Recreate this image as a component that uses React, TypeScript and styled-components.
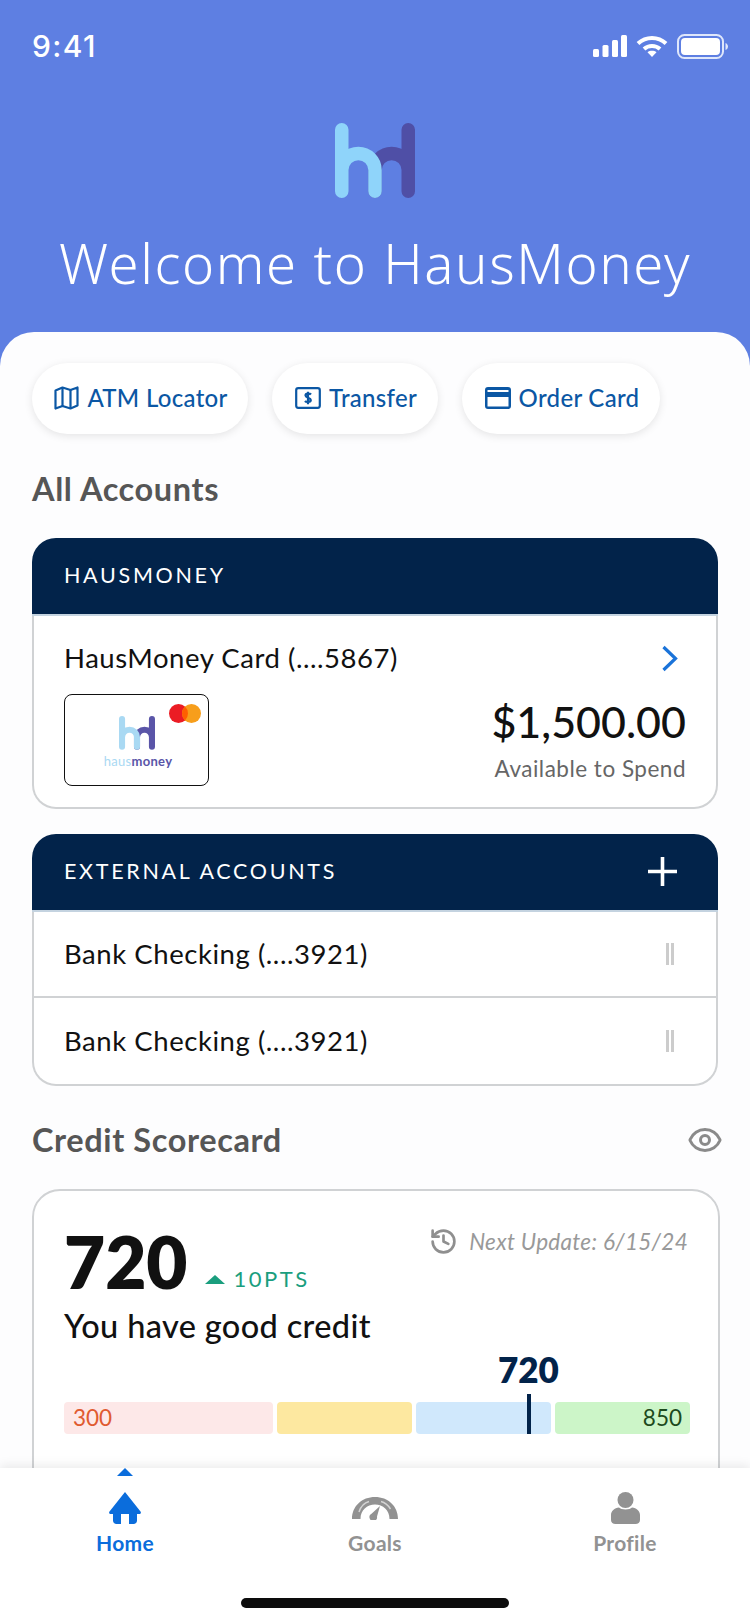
import React from 'react';
import styled, { createGlobalStyle } from 'styled-components';
import { History, Eye } from 'lucide-react';

const FONT = `Lato, "Noto Sans", "Liberation Sans", sans-serif`;

const GlobalStyle = createGlobalStyle`
    html, body {
        margin: 0;
        padding: 0;
        background: #fff;
    }
    * {
        box-sizing: border-box;
    }
`;

const Screen = styled.div`
    position: relative;
    width: 750px;
    height: 1624px;
    overflow: hidden;
    background: #5e7fe2;
    font-family: ${FONT};
    display: flex;
    flex-direction: column;
`;

const StatusBar = styled.div`
    height: 92px;
    flex: none;
    padding: 28px 22px 0 32px;
    display: flex;
    justify-content: space-between;
    align-items: flex-start;
`;

const Clock = styled.span`
    font-family: "Inter", sans-serif;
    font-size: 30px;
    line-height: 36px;
    font-weight: 500;
    letter-spacing: 1.4px;
    color: #fff;
`;

const StatusIcons = styled.div`
    display: flex;
    align-items: center;
    gap: 9px;
    height: 36px;
`;

const Hero = styled.div`
    height: 240px;
    flex: none;
    display: flex;
    flex-direction: column;
    align-items: center;
    padding-top: 31px;
`;

const Title = styled.h1`
    margin: 30px 0 0;
    font-family: "Noto Sans", ${FONT};
    font-size: 54.5px;
    line-height: 70px;
    font-weight: 300;
    letter-spacing: 1.6px;
    color: #fff;
    white-space: nowrap;
`;

const Sheet = styled.div`
    flex: 1;
    background: #fdfdfe;
    border-radius: 34px 34px 0 0;
    padding: 31px 32px 0 32px;
    display: flex;
    flex-direction: column;
`;

const Pills = styled.div`
    display: flex;
    gap: 24px;
`;

const Pill = styled.div<{ $width: number }>`
    width: ${(p) => p.$width}px;
    height: 71px;
    padding: 0 0 2px 2px;
    border-radius: 36px;
    background: #fff;
    box-shadow: 0 2px 8px rgba(0, 0, 0, 0.1);
    display: flex;
    align-items: center;
    justify-content: center;
    gap: 8px;
    color: #0b57a4;
    font-size: 24px;
    font-weight: 500;
    letter-spacing: 0.3px;
    white-space: nowrap;
`;

const SectionHead = styled.div<{ $top: number }>`
    margin-top: ${(p) => p.$top}px;
    height: 38px;
    display: flex;
    align-items: center;
    justify-content: space-between;
`;

const SectionTitle = styled.h2`
    margin: 0;
    font-size: 32.5px;
    line-height: 38px;
    font-weight: 700;
    letter-spacing: 0.6px;
    color: #565656;
`;

const Card = styled.div<{ $top: number }>`
    margin-top: ${(p) => p.$top}px;
    border-radius: 24px;
    background: #fff;
`;

const CardHeader = styled.div`
    height: 78px;
    padding: 0 41px 2px 32px;
    background: #02234a;
    border-radius: 24px 24px 0 0;
    border-bottom: 2px solid #c4d3e0;
    display: flex;
    align-items: center;
    justify-content: space-between;
    color: #fff;
    font-size: 21.5px;
    letter-spacing: 2.7px;
`;

const CardBody = styled.div`
    border: 2px solid #d0d2d4;
    border-top: none;
    border-radius: 0 0 24px 24px;
`;

const FeaturedAccount = styled.div`
    height: 191px;
    padding: 25px 30px 0 30px;
`;

const RowTop = styled.div`
    display: flex;
    align-items: center;
    justify-content: space-between;
    height: 34px;
    padding-right: 8px;
`;

const RowLabel = styled.span`
    font-size: 27.5px;
    line-height: 34px;
    color: #111;
    letter-spacing: 0.55px;
    white-space: nowrap;
`;

const RowBottom = styled.div`
    margin-top: 19px;
    display: flex;
    justify-content: space-between;
`;

const MiniCard = styled.div`
    position: relative;
    width: 145px;
    height: 92px;
    border: 1.5px solid #111;
    border-radius: 8px;
    background: #fff;
    display: flex;
    flex-direction: column;
    align-items: center;
    padding-top: 21px;
`;

const MiniBrand = styled.div`
    font-size: 13px;
    line-height: 14px;
    margin: 4px 0 0 3px;
    font-weight: 700;
    color: #5a55a8;
    letter-spacing: 0.3px;
    span {
        color: #a9d9f3;
        font-weight: 400;
    }
`;

const MasterBadge = styled.svg`
    position: absolute;
    top: 9px;
    right: 7px;
`;

const Balance = styled.div`
    display: flex;
    flex-direction: column;
    align-items: flex-end;
`;

const Amount = styled.div`
    margin-top: 2px;
    font-size: 43px;
    line-height: 52px;
    font-weight: 500;
    color: #111;
`;

const AmountNote = styled.div`
    font-size: 22.5px;
    line-height: 28px;
    margin-top: 7px;
    letter-spacing: 0.5px;
    color: #666;
`;

const AccountRow = styled.div<{ $divider?: boolean }>`
    height: 86px;
    padding: 0 42px 0 30px;
    display: flex;
    align-items: center;
    justify-content: space-between;
    border-bottom: ${(p) => (p.$divider ? '2px solid #d0d2d4' : 'none')};
`;

const Handle = styled.div`
    width: 8px;
    height: 22px;
    border-left: 3px solid #ccc;
    border-right: 3px solid #ccc;
`;

const EyeIcon = styled(Eye)`
    margin-right: -5px;
`;

const ScoreCard = styled.div`
    margin-top: 30px;
    margin-right: -2px;
    border: 2px solid #d0d2d4;
    border-radius: 28px;
    background: #fff;
    height: 400px;
    padding: 36px 28px 0 30px;
`;

const ScoreTop = styled.div`
    display: flex;
    justify-content: space-between;
    align-items: flex-start;
`;

const ScoreLeft = styled.div`
    display: flex;
    align-items: flex-end;
    gap: 17px;
`;

const ScoreValue = styled.div`
    font-size: 71px;
    line-height: 70px;
    font-weight: 800;
    color: #111;
`;

const Delta = styled.div`
    display: flex;
    align-items: center;
    gap: 9px;
    color: #1a9e7e;
    font-size: 22px;
    line-height: 24px;
    letter-spacing: 2.5px;
    margin-bottom: 6px;
`;

const DeltaArrow = styled.span`
    width: 0;
    height: 0;
    border-left: 10px solid transparent;
    border-right: 10px solid transparent;
    border-bottom: 9px solid #1a9e7e;
`;

const NextUpdate = styled.div`
    margin: 0 2px 0 0;
    display: flex;
    align-items: center;
    gap: 11px;
    color: #999;
    font-size: 22.5px;
    line-height: 29px;
    letter-spacing: 0.3px;
    font-style: italic;
`;

const ScoreLine = styled.div`
    margin-top: 9px;
    font-size: 32.5px;
    line-height: 40px;
    font-weight: 500;
    letter-spacing: 0.35px;
    color: #111;
`;

const BarBlock = styled.div`
    position: relative;
    margin-top: 12px;
    padding-top: 44px;
`;

const BarValue = styled.div`
    position: absolute;
    top: -6px;
    left: 434px;
    font-size: 35px;
    line-height: 34px;
    font-weight: 800;
    color: #02234a;
`;

const BarMarker = styled.div`
    position: absolute;
    top: 36px;
    left: 463px;
    width: 4px;
    height: 40px;
    background: #02234a;
`;

const Bar = styled.div`
    display: flex;
    gap: 4px;
`;

const Segment = styled.div<{ $width: number; $bg: string; $color?: string; $end?: boolean }>`
    flex: none;
    width: ${(p) => p.$width}px;
    height: 32px;
    border-radius: 4px;
    background: ${(p) => p.$bg};
    color: ${(p) => p.$color || 'inherit'};
    font-size: 22.5px;
    line-height: 32px;
    padding: 0 8px 0 9px;
    text-align: ${(p) => (p.$end ? 'right' : 'left')};
`;

const NavBar = styled.nav`
    position: absolute;
    left: 0;
    right: 0;
    bottom: 0;
    height: 156px;
    background: #fff;
    box-shadow: 0 -3px 10px rgba(0, 0, 0, 0.08);
    display: grid;
    grid-template-columns: repeat(3, 1fr);
`;

const NavItem = styled.div<{ $active?: boolean }>`
    position: relative;
    height: 84px;
    margin-top: 24px;
    display: flex;
    flex-direction: column;
    align-items: center;
    color: ${(p) => (p.$active ? '#0b6ddc' : '#929292')};
    font-size: 21px;
    font-weight: 700;
`;

const NavIconBox = styled.div`
    height: 32px;
    display: flex;
    align-items: center;
    justify-content: center;
`;

const NavLabel = styled.span`
    margin-top: 6px;
    line-height: 26px;
    letter-spacing: 0.3px;
`;

const ActiveCaret = styled.span`
    position: absolute;
    top: -24px;
    left: 50%;
    margin-left: -8px;
    width: 0;
    height: 0;
    border-left: 8px solid transparent;
    border-right: 8px solid transparent;
    border-bottom: 8px solid #0b6ddc;
`;

const HomeIndicator = styled.div`
    position: absolute;
    left: 241px;
    bottom: 16px;
    width: 268px;
    height: 10px;
    border-radius: 5px;
    background: #0c0c0c;
`;

const Logo: React.FC<{ width: number; light: string; dark: string }> = ({ width, light, dark }) => (
    <svg width={width} height={(width * 75) / 80} viewBox="0 0 80 75" fill="none" strokeWidth="13.5" strokeLinecap="round">
        <path d="M73.25 6.75V68.25M73.25 47A16.6 16.6 0 0 0 40 47V68.25" stroke={dark} />
        <path d="M6.75 6.75V68.25M6.75 47A16.6 16.6 0 0 1 40 47V68.25" stroke={light} />
    </svg>
);

const App: React.FC = () => {
    return (
        <Screen>
            <GlobalStyle />
            <StatusBar>
                <Clock>9:41</Clock>
                <StatusIcons>
                    <svg width="34" height="22" viewBox="0 0 34 22" fill="#fff">
                        <rect x="0" y="14" width="6" height="8" rx="1.5" />
                        <rect x="9.5" y="10" width="6" height="12" rx="1.5" />
                        <rect x="19" y="5" width="6" height="17" rx="1.5" />
                        <rect x="28" y="0" width="6" height="22" rx="1.5" />
                    </svg>
                    <svg width="32" height="22" viewBox="0 0 32 22" fill="none" stroke="#fff" strokeWidth="4">
                        <path d="M2 8.5C10 1 22 1 30 8.5" />
                        <path d="M8 14C12.500 10 19.500 10 24 14" />
                        <path d="M16 22L11.500 17.200C14 15.300 18 15.300 20.500 17.200Z" fill="#fff" stroke="none" />
                    </svg>
                    <svg width="51" height="25" viewBox="0 0 51 25" fill="none">
                        <rect x="1" y="1" width="45" height="23" rx="6.500" stroke="#dfe7fb" strokeWidth="2" />
                        <rect x="4" y="4" width="39" height="17" rx="4" fill="#fff" />
                        <path d="M48.500 9V16C50 15.500 51 14 51 12.500S50 9.500 48.500 9Z" fill="#dfe7fb" />
                    </svg>
                </StatusIcons>
            </StatusBar>
            <Hero>
                <Logo width={80} light="#8fd4fa" dark="#4f4fa6" />
                <Title>Welcome to HausMoney</Title>
            </Hero>
            <Sheet>
                <Pills>
                    <Pill $width={216}>
                        <svg width="25" height="24" viewBox="0 0 25 24" fill="none" stroke="#0b57a4" strokeWidth="2.200" strokeLinejoin="round">
                            <path d="M1.500 4.500L8.500 1.500L16.500 4L23.500 1.500V19.500L16.500 22.500L8.500 20L1.500 22.500Z" />
                            <path d="M8.500 1.500V20M16.500 4V22.500" />
                        </svg>
                        ATM Locator
                    </Pill>
                    <Pill $width={166}>
                        <svg width="26" height="22" viewBox="0 0 26 22" fill="none">
                            <rect x="1.200" y="1.200" width="23.600" height="19.600" rx="2" stroke="#0b57a4" strokeWidth="2.200" />
                            <path d="M16 7.500C15 6.300 10.500 6 10.500 8.500C10.500 11 15.800 10.500 15.800 13C15.800 15.500 11 15.300 10 14M13 4.800V17.200" stroke="#0b57a4" strokeWidth="2.200" />
                        </svg>
                        Transfer
                    </Pill>
                    <Pill $width={198}>
                        <svg width="26" height="22" viewBox="0 0 26 22">
                            <path fillRule="evenodd" d="M3 0H23A3 3 0 0 1 26 3V19A3 3 0 0 1 23 22H3A3 3 0 0 1 0 19V3A3 3 0 0 1 3 0ZM2.500 3V5H23.500V3ZM2.500 10V19.500H23.500V10Z" fill="#0b57a4" />
                        </svg>
                        Order Card
                    </Pill>
                </Pills>
                <SectionHead $top={36}>
                    <SectionTitle>All Accounts</SectionTitle>
                </SectionHead>
                <Card $top={30}>
                    <CardHeader>HAUSMONEY</CardHeader>
                    <CardBody>
                        <FeaturedAccount>
                            <RowTop>
                                <RowLabel>HausMoney Card (....5867)</RowLabel>
                                <svg width="17" height="27" viewBox="0 0 17 27" fill="none" stroke="#1a73d9" strokeWidth="3.200">
                                    <path d="M2.500 2L14.500 13.500L2.500 25" />
                                </svg>
                            </RowTop>
                            <RowBottom>
                                <MiniCard>
                                    <MasterBadge width="32" height="19" viewBox="0 0 32 19">
                                        <circle cx="9.500" cy="9.500" r="9.500" fill="#eb1c24" />
                                        <circle cx="22.500" cy="9.500" r="9.500" fill="#f79e1b" />
                                        <path d="M16 2.600A9.500 9.500 0 0 1 16 16.400A9.500 9.500 0 0 1 16 2.600Z" fill="#ff5f00" />
                                    </MasterBadge>
                                    <Logo width={36} light="#a9d9f3" dark="#5a55a8" />
                                    <MiniBrand><span>haus</span>money</MiniBrand>
                                </MiniCard>
                                <Balance>
                                    <Amount>$1,500.00</Amount>
                                    <AmountNote>Available to Spend</AmountNote>
                                </Balance>
                            </RowBottom>
                        </FeaturedAccount>
                    </CardBody>
                </Card>
                <Card $top={25}>
                    <CardHeader>
                        EXTERNAL ACCOUNTS
                        <svg width="29" height="29" viewBox="0 0 29 29" stroke="#fff" strokeWidth="3.600">
                            <path d="M14.500 0V29M0 14.500H29" />
                        </svg>
                    </CardHeader>
                    <CardBody>
                        <AccountRow $divider>
                            <RowLabel>Bank Checking (....3921)</RowLabel>
                            <Handle />
                        </AccountRow>
                        <AccountRow>
                            <RowLabel>Bank Checking (....3921)</RowLabel>
                            <Handle />
                        </AccountRow>
                    </CardBody>
                </Card>
                <SectionHead $top={35}>
                    <SectionTitle>Credit Scorecard</SectionTitle>
                    <EyeIcon size={36} color="#8a8a8a" strokeWidth={2} />
                </SectionHead>
                <ScoreCard>
                    <ScoreTop>
                        <ScoreLeft>
                            <ScoreValue>720</ScoreValue>
                            <Delta>
                                <DeltaArrow />
                                10PTS
                            </Delta>
                        </ScoreLeft>
                        <NextUpdate>
                            <History size={29} color="#8f8f8f" strokeWidth={2.2} />
                            Next Update: 6/15/24
                        </NextUpdate>
                    </ScoreTop>
                    <ScoreLine>You have good credit</ScoreLine>
                    <BarBlock>
                        <BarValue>720</BarValue>
                        <BarMarker />
                        <Bar>
                            <Segment $width={209} $bg="#fde8e8" $color="#e05a30">300</Segment>
                            <Segment $width={135} $bg="#fde8a0" />
                            <Segment $width={135} $bg="#d0e8fc" />
                            <Segment $width={135} $bg="#ccf5c8" $color="#1c4a1c" $end>850</Segment>
                        </Bar>
                    </BarBlock>
                </ScoreCard>
            </Sheet>
            <NavBar>
                <NavItem $active>
                    <ActiveCaret />
                    <NavIconBox>
                        <svg width="32" height="32" viewBox="0 0 32 32" fill="#0b6ddc">
                            <path d="M16 0L31.500 19.500C32.500 21 31.500 22 30 22H28V28.500C28 30.500 26.500 32 24.500 32H20V22H12V32H7.500C5.500 32 4 30.500 4 28.500V22H2C.5 22 -.5 21 .5 19.500Z" />
                        </svg>
                    </NavIconBox>
                    <NavLabel>Home</NavLabel>
                </NavItem>
                <NavItem>
                    <NavIconBox>
                        <svg width="46" height="23" viewBox="0 0 46 23" fill="#929292">
                            <path d="M0 22C0 9 10 0 23 0C36 0 46 9 46 22H37.500C37.500 13 31 7.500 23 7.500C15 7.500 8.500 13 8.500 22Z" />
                            <path d="M28 9L25 19.500A3.800 3.800 0 1 1 19.500 16.800Z" />
                            <path d="M7 15C9 9 13 5.500 17 4.500M29 4.500C33 5.500 36 8 38.500 12" fill="none" stroke="#d4d4d4" strokeWidth="1.500" />
                        </svg>
                    </NavIconBox>
                    <NavLabel>Goals</NavLabel>
                </NavItem>
                <NavItem>
                    <NavIconBox>
                        <svg width="29" height="32" viewBox="0 0 29 32" fill="#929292">
                            <ellipse cx="14.500" cy="8" rx="8" ry="8" />
                            <path d="M8 15.500C10 18 19 18 21 15.500C25.500 16 29 19 29 23V28C29 30.500 27 32 24.500 32H4.500C2 32 0 30.500 0 28V23C0 19 3.500 16 8 15.500Z" />
                        </svg>
                    </NavIconBox>
                    <NavLabel>Profile</NavLabel>
                </NavItem>
                <HomeIndicator />
            </NavBar>
        </Screen>
    );
};

export default App;
